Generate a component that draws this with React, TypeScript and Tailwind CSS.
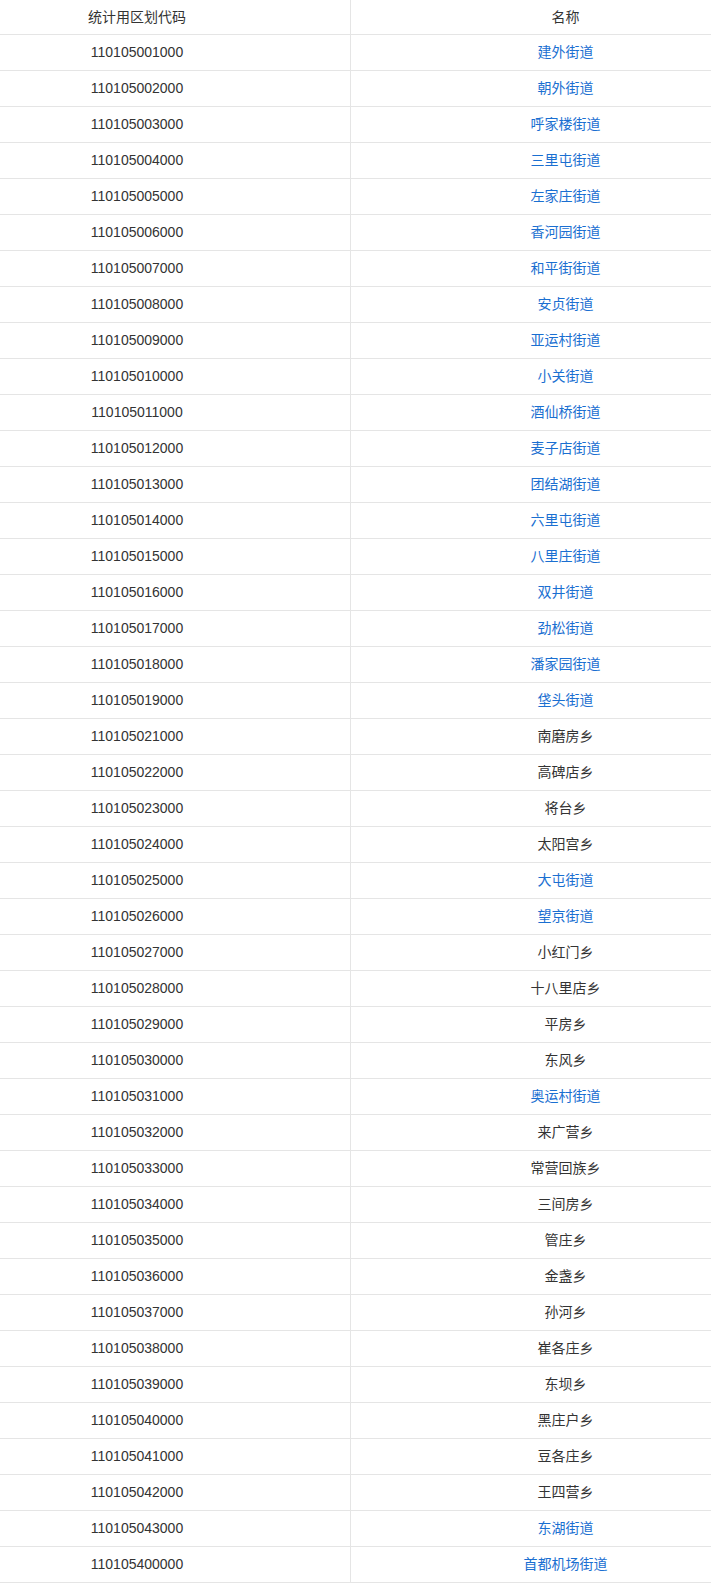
const rows: [string, string, boolean][] = [
  ["110105001000", "建外街道", true],
  ["110105002000", "朝外街道", true],
  ["110105003000", "呼家楼街道", true],
  ["110105004000", "三里屯街道", true],
  ["110105005000", "左家庄街道", true],
  ["110105006000", "香河园街道", true],
  ["110105007000", "和平街街道", true],
  ["110105008000", "安贞街道", true],
  ["110105009000", "亚运村街道", true],
  ["110105010000", "小关街道", true],
  ["110105011000", "酒仙桥街道", true],
  ["110105012000", "麦子店街道", true],
  ["110105013000", "团结湖街道", true],
  ["110105014000", "六里屯街道", true],
  ["110105015000", "八里庄街道", true],
  ["110105016000", "双井街道", true],
  ["110105017000", "劲松街道", true],
  ["110105018000", "潘家园街道", true],
  ["110105019000", "垡头街道", true],
  ["110105021000", "南磨房乡", false],
  ["110105022000", "高碑店乡", false],
  ["110105023000", "将台乡", false],
  ["110105024000", "太阳宫乡", false],
  ["110105025000", "大屯街道", true],
  ["110105026000", "望京街道", true],
  ["110105027000", "小红门乡", false],
  ["110105028000", "十八里店乡", false],
  ["110105029000", "平房乡", false],
  ["110105030000", "东风乡", false],
  ["110105031000", "奥运村街道", true],
  ["110105032000", "来广营乡", false],
  ["110105033000", "常营回族乡", false],
  ["110105034000", "三间房乡", false],
  ["110105035000", "管庄乡", false],
  ["110105036000", "金盏乡", false],
  ["110105037000", "孙河乡", false],
  ["110105038000", "崔各庄乡", false],
  ["110105039000", "东坝乡", false],
  ["110105040000", "黑庄户乡", false],
  ["110105041000", "豆各庄乡", false],
  ["110105042000", "王四营乡", false],
  ["110105043000", "东湖街道", true],
  ["110105400000", "首都机场街道", true],
];

// table is wider than the viewport and scrolled a bit to the right
export default function App() {
  return (
    <div className="w-full overflow-hidden bg-white">
      <div
        className="ml-[-76px] w-[856px] text-[14px] text-[#333]"
        style={{ fontFamily: '"Liberation Sans", "Noto Sans CJK SC", sans-serif' }}
      >
        <div className="grid grid-cols-[427px_1fr] h-[35px] border-b border-[#e5e5e5] items-center text-center">
          <div className="h-full flex items-center justify-center border-r border-[#e5e5e5]">统计用区划代码</div>
          <div>名称</div>
        </div>
        {rows.map(([code, name, link]) => (
          <div key={code} className="grid grid-cols-[427px_1fr] h-[36px] border-b border-[#e5e5e5] items-center text-center">
            <div className="h-full flex items-center justify-center border-r border-[#e5e5e5]">{code}</div>
            <div className={link ? "text-[#1a6fd1]" : ""}>{name}</div>
          </div>
        ))}
      </div>
    </div>
  );
}
